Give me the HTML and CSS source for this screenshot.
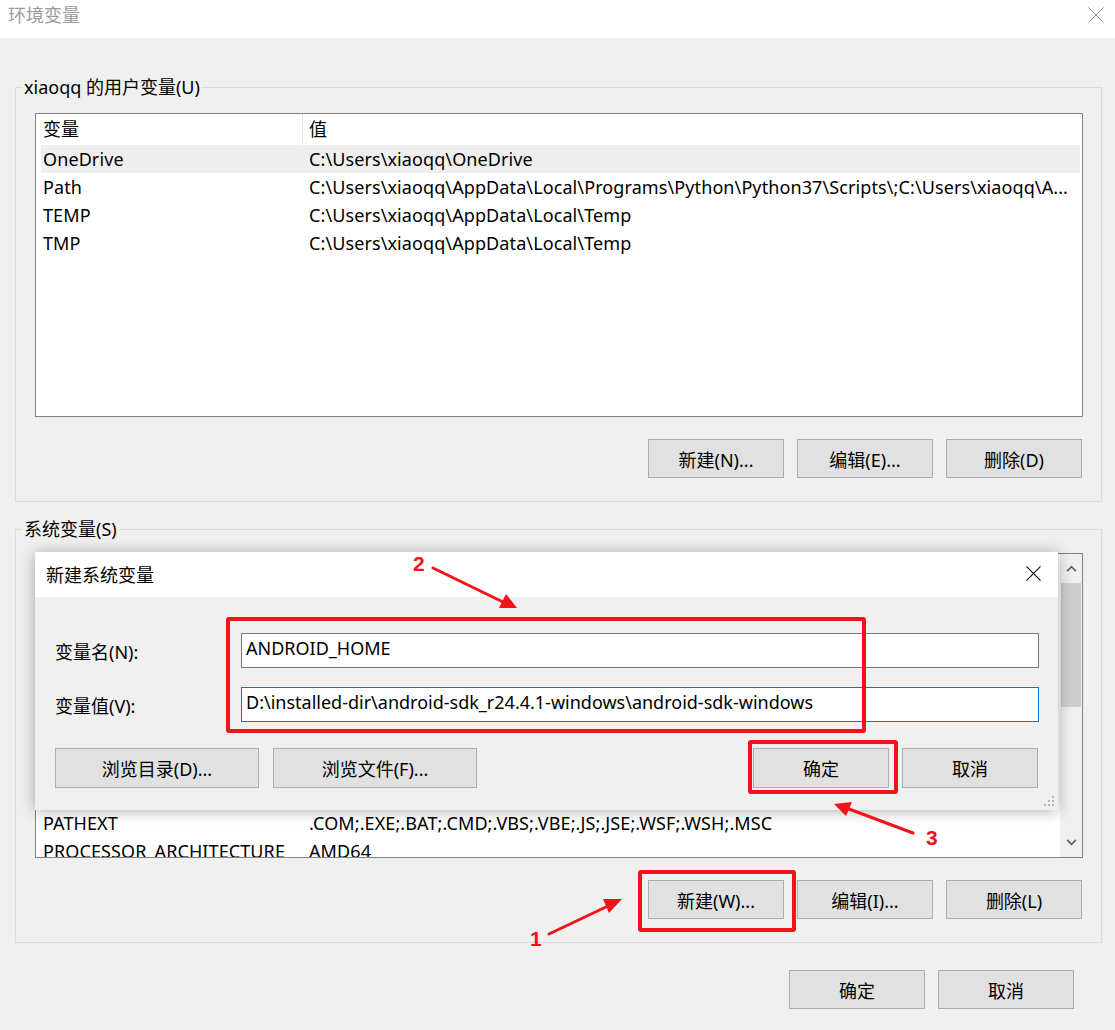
FILE: index.html
```html
<!DOCTYPE html>
<html lang="zh-CN">
<head>
<meta charset="utf-8">
<title>环境变量</title>
<link rel="stylesheet" href="styles.css">
</head>
<body>
<div class="window">
  <header class="titlebar">
    <span class="title">环境变量</span>
    <svg class="close" viewBox="0 0 16 16"><path d="M0.5 0.5L15.5 15.5M15.5 0.5L0.5 15.5"/></svg>
  </header>
  <main class="main">
    <fieldset class="group group-user">
      <legend>xiaoqq 的用户变量(U)</legend>
      <div class="list list-user">
        <div class="table">
          <div class="row head"><span class="cell k">变量</span><span class="cell v">值</span></div>
          <div class="row sel"><span class="cell k">OneDrive</span><span class="cell v">C:\Users\xiaoqq\OneDrive</span></div>
          <div class="row"><span class="cell k">Path</span><span class="cell v">C:\Users\xiaoqq\AppData\Local\Programs\Python\Python37\Scripts\;C:\Users\xiaoqq\A...</span></div>
          <div class="row"><span class="cell k">TEMP</span><span class="cell v">C:\Users\xiaoqq\AppData\Local\Temp</span></div>
          <div class="row"><span class="cell k">TMP</span><span class="cell v">C:\Users\xiaoqq\AppData\Local\Temp</span></div>
        </div>
      </div>
      <div class="btns">
        <div class="btn">新建(N)...</div>
        <div class="btn">编辑(E)...</div>
        <div class="btn">删除(D)</div>
      </div>
    </fieldset>
    <fieldset class="group group-sys">
      <legend>系统变量(S)</legend>
      <div class="list list-sys">
        <div class="table">
          <div class="row head under"><span class="cell k">变量</span><span class="cell v">值</span></div>
          <div class="row under"><span class="cell k">ComSpec</span><span class="cell v">C:\WINDOWS\system32\cmd.exe</span></div>
          <div class="row under"><span class="cell k">DriverData</span><span class="cell v">C:\Windows\System32\Drivers\DriverData</span></div>
          <div class="row under"><span class="cell k">JAVA_HOME</span><span class="cell v">C:\Program Files\Java\jdk1.8.0_201</span></div>
          <div class="row under"><span class="cell k">CLASSPATH</span><span class="cell v">.;%JAVA_HOME%\lib\dt.jar;%JAVA_HOME%\lib\tools.jar</span></div>
          <div class="row under"><span class="cell k">MAVEN_HOME</span><span class="cell v">D:\installed-dir\apache-maven-3.6.0</span></div>
          <div class="row under"><span class="cell k">NUMBER_OF_PROCESSORS</span><span class="cell v">8</span></div>
          <div class="row under"><span class="cell k">OS</span><span class="cell v">Windows_NT</span></div>
          <div class="row under"><span class="cell k">Path</span><span class="cell v">C:\WINDOWS\system32;C:\WINDOWS;C:\WINDOWS\System32\Wbem</span></div>
          <div class="row"><span class="cell k">PATHEXT</span><span class="cell v">.COM;.EXE;.BAT;.CMD;.VBS;.VBE;.JS;.JSE;.WSF;.WSH;.MSC</span></div>
          <div class="row"><span class="cell k">PROCESSOR_ARCHITECTURE</span><span class="cell v">AMD64</span></div>
        </div>
        <div class="scrollbar">
          <div class="sb-arrow"><svg viewBox="0 0 12 8"><path d="M1 7L6 2L11 7"/></svg></div>
          <div class="sb-thumb"></div>
          <div class="sb-track"></div>
          <div class="sb-arrow"><svg viewBox="0 0 12 8"><path d="M1 1L6 6L11 1"/></svg></div>
        </div>
      </div>
      <div class="btns">
        <div class="btn">新建(W)...</div>
        <div class="btn">编辑(I)...</div>
        <div class="btn">删除(L)</div>
      </div>
    </fieldset>
    <div class="footer">
      <div class="btn">确定</div>
      <div class="btn">取消</div>
    </div>
  </main>

  <section class="dialog">
    <div class="dlg-title">
      <span>新建系统变量</span>
      <svg class="dlg-close" viewBox="0 0 16 16"><path d="M0.5 0.5L15.5 15.5M15.5 0.5L0.5 15.5"/></svg>
    </div>
    <div class="dlg-body">
      <div class="field"><label>变量名(N):</label><div class="input">ANDROID_HOME</div></div>
      <div class="field"><label>变量值(V):</label><div class="input focus">D:\installed-dir\android-sdk_r24.4.1-windows\android-sdk-windows</div></div>
      <div class="dlg-btns">
        <div class="btn wide">浏览目录(D)...</div>
        <div class="btn wide">浏览文件(F)...</div>
        <div class="spacer"></div>
        <div class="btn">确定</div>
        <div class="btn">取消</div>
      </div>
    </div>
    <svg class="grip" viewBox="0 0 12 12"><rect x="9" y="1" width="2" height="2"/><rect x="5" y="5" width="2" height="2"/><rect x="9" y="5" width="2" height="2"/><rect x="1" y="9" width="2" height="2"/><rect x="5" y="9" width="2" height="2"/><rect x="9" y="9" width="2" height="2"/></svg>
  </section>

  <div class="mark m1"></div>
  <div class="mark m2"></div>
  <div class="mark m3"></div>

  <svg class="arrows" viewBox="0 0 1115 1030">
    <line x1="549" y1="934" x2="608" y2="906"/>
    <polygon points="622,899 609,913 603,899"/>
    <text x="530" y="946">1</text>
    <line x1="433" y1="568" x2="503" y2="602"/>
    <polygon points="517,608 499,608 506,594"/>
    <text x="413" y="571">2</text>
    <line x1="913" y1="833" x2="849" y2="809"/>
    <polygon points="834,804 852,802 846,816"/>
    <text x="926" y="845">3</text>
  </svg>
</div>
</body>
</html>
```
FILE: styles.css
```css
* { box-sizing: border-box; }
html, body { margin: 0; padding: 0; }
body {
  background: #f0f0f0;
  font-family: "Noto Sans", "Noto Sans CJK SC", sans-serif;
  font-size: 18px;
  color: #000;
}
.window {
  position: relative;
  width: 1115px;
  height: 1030px;
  overflow: hidden;
  background: #f0f0f0;
}
.titlebar {
  height: 38px;
  background: #fff;
  display: flex;
  align-items: flex-start;
  justify-content: space-between;
  padding: 0 11px 0 8px;
}
.title { color: #9a9a9a; font-size: 18px; line-height: 25px; padding-top: 3px; }
.titlebar .close { width: 16px; height: 16px; margin-top: 7px; fill: none; stroke: #8c8c8c; stroke-width: 1; }

.main { padding: 0 13px 0 15px; }
.group {
  margin: 0;
  padding: 0;
  min-width: 0;
  border: 1px solid #dcdcdc;
}
.group legend {
  margin-left: 6px;
  padding: 0 2px;
  height: 22px;
  line-height: 22px;
  font-size: 18px;
}
.group-user { margin-top: 38px; }
.group-sys { margin-top: 16px; }

.list {
  display: flex;
  overflow: hidden;
  background: #fff;
  border: 1px solid #828282;
  margin: 15px 18px 0 19px;
}
.list-user { height: 304px; }
.list-sys { height: 305px; margin-top: 13px; }

.table { flex: 1; min-width: 0; padding: 0 2px 0 5px; }
.row {
  display: grid;
  grid-template-columns: 261px 1fr;
  height: 28px;
  line-height: 28px;
  white-space: nowrap;
  letter-spacing: 0.1px;
}
.row.head { height: 31px; line-height: 31px; }
.row.sel { background: #efefef; }
.row.under { visibility: hidden; }
.cell { overflow: hidden; padding-left: 2px; }
.cell.v { border-left: 1px solid transparent; padding-left: 6px; }
.head .cell.v { border-left-color: #e5e5e5; }

.scrollbar {
  width: 22px;
  background: #f0f0f0;
  display: flex;
  flex-direction: column;
}
.sb-arrow { height: 29px; display: flex; align-items: center; justify-content: center; }
.sb-arrow svg { width: 11px; height: 7px; fill: none; stroke: #606060; stroke-width: 2; }
.sb-thumb { height: 124px; background: #cdcdcd; margin: 0 1px; }
.sb-track { flex: 1; }

.btns {
  display: flex;
  justify-content: flex-end;
  gap: 13px;
  margin: 22px 19px 23px 0;
}
.btn {
  width: 136px;
  height: 39px;
  background: #e1e1e1;
  border: 1px solid #adadad;
  display: flex;
  align-items: center;
  justify-content: center;
  font-size: 18px;
  white-space: nowrap;
}
.footer {
  display: flex;
  justify-content: flex-end;
  gap: 13px;
  margin-top: 27px;
  padding-right: 28px;
}

.dialog {
  position: absolute;
  left: 35px;
  top: 552px;
  width: 1023px;
  height: 258px;
  background: #f0f0f0;
  box-shadow: 0 1px 14px rgba(0, 0, 0, 0.32);
  display: flex;
  flex-direction: column;
}
.dlg-title {
  height: 45px;
  background: #fff;
  display: flex;
  align-items: center;
  justify-content: space-between;
  padding: 0 17px 2px 11px;
}
.dlg-close { width: 15px; height: 15px; fill: none; stroke: #000; stroke-width: 1.1; }
.dlg-body {
  display: flex;
  flex-direction: column;
  padding: 36px 19px 0 20px;
}
.field { display: flex; align-items: center; height: 35px; }
.field + .field { margin-top: 19px; }
.field label { width: 186px; }
.input {
  flex: 1;
  height: 35px;
  line-height: 29px;
  padding-left: 4px;
  background: #fff;
  border: 1px solid #7a7a7a;
  white-space: nowrap;
  overflow: hidden;
}
.input.focus { border-color: #0078d7; }
.dlg-btns {
  display: flex;
  gap: 14px;
  margin-top: 26px;
  padding-right: 1px;
}
.dlg-btns .btn { height: 40px; }
.dlg-btns .wide { width: 204px; }
.dlg-btns .spacer { flex: 1; }
.dlg-btns .spacer + .btn { margin-right: -1px; }
.grip {
  position: absolute;
  right: 3px;
  bottom: 3px;
  width: 12px;
  height: 12px;
  fill: #b8b8b8;
}

.mark {
  position: absolute;
  border: 4px solid #f2121a;
  border-radius: 3px;
}
.m1 { left: 638px; top: 870px; width: 158px; height: 62px; }
.m2 { left: 226px; top: 617px; width: 640px; height: 116px; }
.m3 { left: 748px; top: 740px; width: 150px; height: 54px; }

.arrows {
  position: absolute;
  left: 0;
  top: 0;
  width: 1115px;
  height: 1030px;
  pointer-events: none;
}
.arrows line { stroke: #f2121a; stroke-width: 3; stroke-linecap: round; }
.arrows polygon { fill: #f2121a; }
.arrows text {
  fill: #f2121a;
  font-family: "Liberation Sans", Arial, sans-serif;
  font-weight: bold;
  font-size: 21px;
}
```
